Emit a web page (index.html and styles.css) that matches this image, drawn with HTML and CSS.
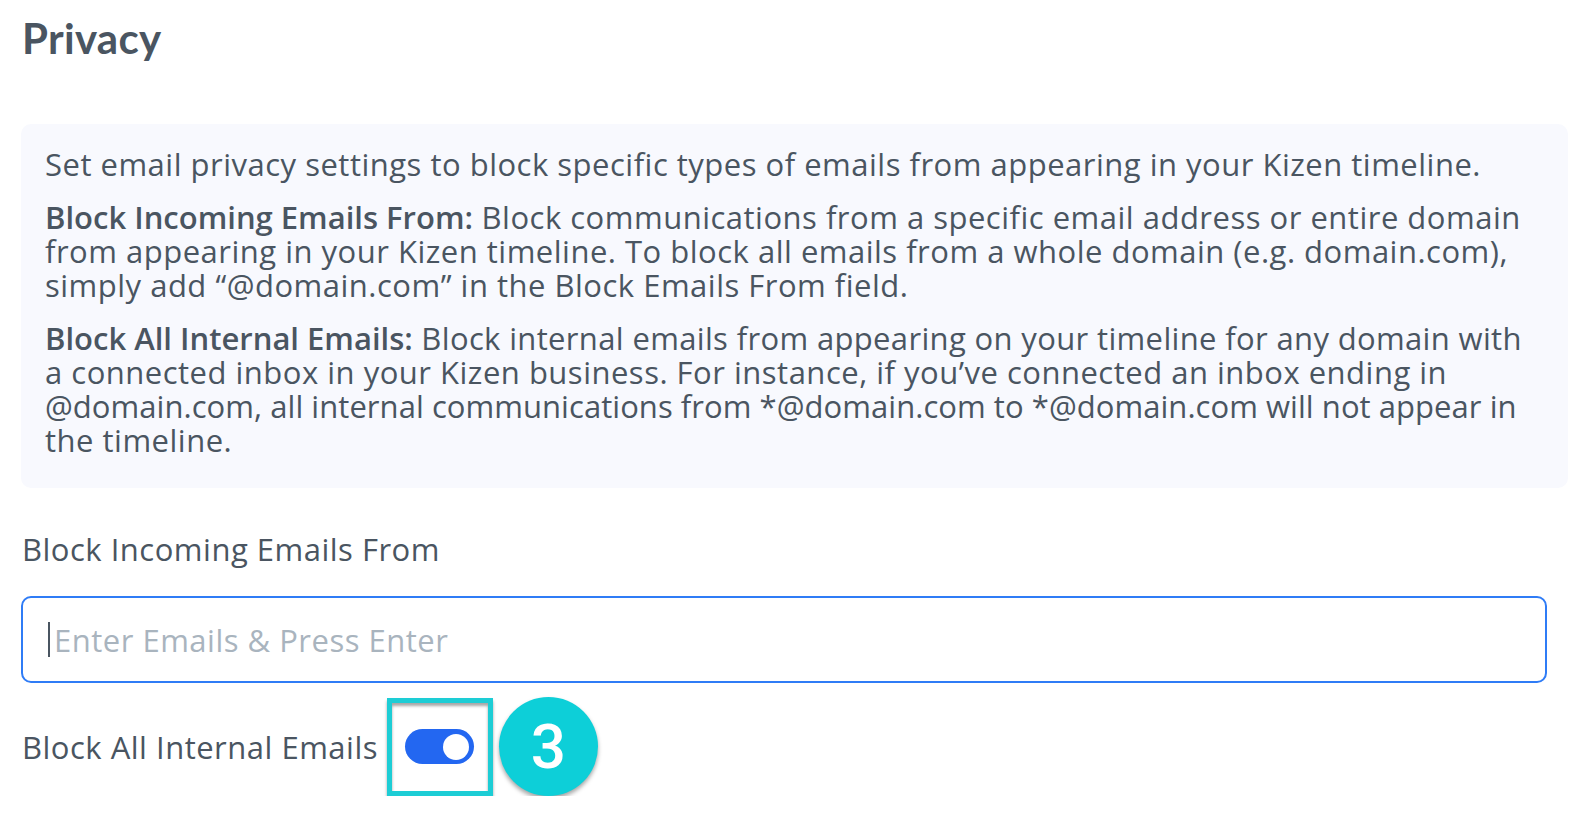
FILE: index.html
```html
<!DOCTYPE html>
<html lang="en">
<head>
<meta charset="utf-8">
<title>Privacy</title>
<link rel="stylesheet" href="styles.css">
</head>
<body>
<main class="page">
  <h1 class="title">Privacy</h1>
  <section class="info">
    <p class="para">Set email privacy settings to block specific types of emails from appearing in your Kizen timeline.</p>
    <p class="para"><strong>Block Incoming Emails From:</strong> Block communications from a specific email address or entire domain<br>from appearing in your Kizen timeline. To block all emails from a whole domain (e.g. domain.com),<br>simply add “@domain.com” in the Block Emails From field.</p>
    <p class="para"><strong>Block All Internal Emails:</strong> <span class="snug">Block internal emails from appearing on your timeline for any domain with</span><br>a connected inbox in your Kizen business. For instance, if you’ve connected an inbox ending in<br><span class="tight">@domain.com, all internal communications from *@domain.com to *@domain.com will not appear in</span><br>the timeline.</p>
  </section>
  <label class="field-label" for="emails">Block Incoming Emails From</label>
  <div class="input-box">
    <span class="caret"></span>
    <input id="emails" class="input" type="text" placeholder="Enter Emails &amp; Press Enter">
  </div>
  <div class="toggle-row">
    <span class="toggle-label">Block All Internal Emails</span>
    <div class="highlight">
      <span class="toggle"><span class="knob"></span></span>
    </div>
    <span class="badge">3</span>
  </div>
</main>
</body>
</html>
```
FILE: styles.css
```css
* { box-sizing: border-box; }
html, body { margin: 0; padding: 0; background: #ffffff; }
body {
  font-family: "Open Sans", Lato, sans-serif;
  color: #4a5561;
}
.page {
  padding: 10px 0 0 21px;
  width: 1568px;
}
.title {
  margin: 0 0 0 1px;
  font-family: Lato, "Open Sans", sans-serif;
  font-size: 42px;
  line-height: 56px;
  font-weight: 700;
  letter-spacing: 0.3px;
  color: #4a5561;
}
.info {
  margin-top: 58px;
  background: #f8f9fe;
  border-radius: 10px;
  padding: 23px 20px 31px 24px;
}
.para {
  margin: 0 0 19px 0;
  font-size: 31px;
  line-height: 34px;
  letter-spacing: 0.5px;
  white-space: nowrap;
}
.para:last-child { margin-bottom: 0; }
.para strong { font-weight: 600; letter-spacing: 0; }
.para .snug { letter-spacing: 0.35px; }
.para .tight { letter-spacing: 0.05px; }
.field-label {
  display: block;
  margin: 44px 0 0 1px;
  font-size: 31px;
  line-height: 34px;
  letter-spacing: 0.5px;
}
.input-box {
  margin-top: 30px;
  width: 1526px;
  height: 87px;
  border: 2px solid #2f7cf6;
  border-radius: 10px;
  display: flex;
  align-items: center;
  padding-left: 25px;
}
.caret {
  width: 2px;
  height: 35px;
  background: #4a5561;
  flex: none;
}
.input {
  border: none;
  outline: none;
  background: transparent;
  font-family: inherit;
  font-size: 31px;
  letter-spacing: 0.5px;
  color: #4a5561;
  padding: 0 0 0 4px;
  flex: 1;
}
.input::placeholder { color: #a9b4be; }
.toggle-row {
  margin-top: 14px;
  display: flex;
  align-items: center;
}
.toggle-label {
  margin-left: 1px;
  font-size: 31px;
  line-height: 34px;
  letter-spacing: 0.5px;
}
.highlight {
  margin-left: 9px;
  width: 106px;
  height: 98px;
  border: 5px solid #1dcdd5;
  box-shadow: 0 3px 3px rgba(0,0,0,0.35), inset 0 3px 3px rgba(0,0,0,0.35);
  display: flex;
  align-items: center;
  padding-left: 13px;
}
.toggle {
  width: 69px;
  height: 35px;
  border-radius: 18px;
  background: #2367f1;
  display: flex;
  align-items: center;
  justify-content: flex-end;
  padding-right: 5px;
}
.knob {
  width: 26px;
  height: 26px;
  border-radius: 50%;
  background: #ffffff;
}
.badge {
  margin-left: 6px;
  width: 99px;
  height: 99px;
  border-radius: 50%;
  background: #0dcfd8;
  color: #ffffff;
  display: flex;
  align-items: center;
  justify-content: center;
  font-family: Roboto, "Liberation Sans", sans-serif;
  font-size: 62px;
  font-weight: 500;
  box-shadow: 0 3px 4px rgba(0,0,0,0.35);
}
```
